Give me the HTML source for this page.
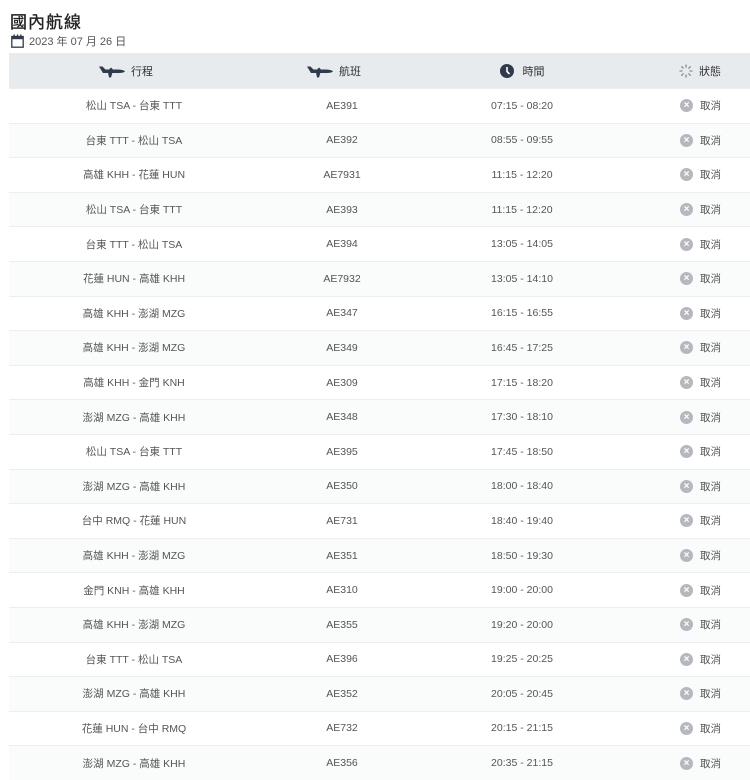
<!DOCTYPE html>
<html><head><meta charset="utf-8">
<style>
*{margin:0;padding:0;box-sizing:border-box}
body{width:750px;height:780px;overflow:hidden;background:#fff;font-family:"Liberation Sans","Noto Sans CJK TC",sans-serif;color:#444}
h1{position:absolute;left:10px;top:8px;font-size:17px;font-weight:normal;color:#222;letter-spacing:1px;-webkit-text-stroke:0.3px #222}
.date{position:absolute;left:11px;top:33px;font-size:11px;color:#555;display:flex;align-items:center;gap:5px}
.tbl{position:absolute;left:9px;top:53px;width:741px}
.hd{height:35px;background:#e8ebee;display:flex;font-size:11px;color:#333}
.row{height:34.6px;display:flex;font-size:10.5px;color:#555;border-top:1px solid #eceef0}
.row:nth-child(even){background:#fafbfb}
.c{display:flex;align-items:center;justify-content:center}
.c1{width:250px}.c2{width:166px}.c3{width:194px}.c4{width:131px;justify-content:flex-start;padding-left:61px}
.hd .c1,.hd .c2{padding-right:16px}
.hd .c4{padding-left:60px}
.x{width:13px;height:13px;border-radius:50%;background:#b5b8bc;color:#fff;font-size:10px;line-height:13px;text-align:center;font-weight:bold;margin-right:7px}
.pl{margin-right:6px}
</style></head><body>
<h1>國內航線</h1>
<div class="date"><svg width="13" height="14" viewBox="0 0 13 14"><rect x="0.8" y="2.5" width="11.4" height="10.7" fill="none" stroke="#2f3b4c" stroke-width="1.3"/><rect x="0.8" y="2.5" width="11.4" height="2.7" fill="#2f3b4c"/><rect x="2.5" y="0.5" width="1.4" height="3" fill="#2f3b4c"/><rect x="5.8" y="0.5" width="1.4" height="3" fill="#2f3b4c"/><rect x="9.1" y="0.5" width="1.4" height="3" fill="#2f3b4c"/></svg>2023 年 07 月 26 日</div>
<div class="tbl">
<div class="hd">
<div class="c c1"><svg class="pl" width="26" height="14" viewBox="0 0 26 14"><path d="M0 2.5 L3.5 2.5 L6.5 5.5 L20 5.5 Q25.5 6 26 7.5 Q24.5 9 20 9 L4 9 Z M9 8.5 L13.5 8.5 L12 13.5 L10 13.5 Z M10 5.5 L12 3.5 L14 5.5 Z" fill="#2f3b4c"/></svg>行程</div>
<div class="c c2"><svg class="pl" width="26" height="14" viewBox="0 0 26 14"><path d="M0 2.5 L3.5 2.5 L6.5 5.5 L20 5.5 Q25.5 6 26 7.5 Q24.5 9 20 9 L4 9 Z M9 8.5 L13.5 8.5 L12 13.5 L10 13.5 Z M10 5.5 L12 3.5 L14 5.5 Z" fill="#2f3b4c"/></svg>航班</div>
<div class="c c3"><svg style="margin-right:9px" width="14" height="14" viewBox="0 0 14 14"><circle cx="7" cy="7" r="7" fill="#2f3b4c"/><path d="M7 3 V7.5 L9.5 10" stroke="#fff" stroke-width="1.6" fill="none"/></svg>時間</div>
<div class="c c4"><svg style="margin-right:6px" width="14" height="14" viewBox="0 0 14 14" stroke="#777" stroke-width="1.1"><path d="M7 0.5V3.5M7 10.5V13.5M0.5 7H3.5M10.5 7H13.5M2.4 2.4L4.5 4.5M9.5 9.5L11.6 11.6M2.4 11.6L4.5 9.5M9.5 4.5L11.6 2.4"/></svg>狀態</div>
</div>
<div class="rows">
<div class="row"><div class="c c1">松山 TSA - 台東 TTT</div><div class="c c2">AE391</div><div class="c c3">07:15 - 08:20</div><div class="c c4"><span class="x">×</span>取消</div></div>
<div class="row"><div class="c c1">台東 TTT - 松山 TSA</div><div class="c c2">AE392</div><div class="c c3">08:55 - 09:55</div><div class="c c4"><span class="x">×</span>取消</div></div>
<div class="row"><div class="c c1">高雄 KHH - 花蓮 HUN</div><div class="c c2">AE7931</div><div class="c c3">11:15 - 12:20</div><div class="c c4"><span class="x">×</span>取消</div></div>
<div class="row"><div class="c c1">松山 TSA - 台東 TTT</div><div class="c c2">AE393</div><div class="c c3">11:15 - 12:20</div><div class="c c4"><span class="x">×</span>取消</div></div>
<div class="row"><div class="c c1">台東 TTT - 松山 TSA</div><div class="c c2">AE394</div><div class="c c3">13:05 - 14:05</div><div class="c c4"><span class="x">×</span>取消</div></div>
<div class="row"><div class="c c1">花蓮 HUN - 高雄 KHH</div><div class="c c2">AE7932</div><div class="c c3">13:05 - 14:10</div><div class="c c4"><span class="x">×</span>取消</div></div>
<div class="row"><div class="c c1">高雄 KHH - 澎湖 MZG</div><div class="c c2">AE347</div><div class="c c3">16:15 - 16:55</div><div class="c c4"><span class="x">×</span>取消</div></div>
<div class="row"><div class="c c1">高雄 KHH - 澎湖 MZG</div><div class="c c2">AE349</div><div class="c c3">16:45 - 17:25</div><div class="c c4"><span class="x">×</span>取消</div></div>
<div class="row"><div class="c c1">高雄 KHH - 金門 KNH</div><div class="c c2">AE309</div><div class="c c3">17:15 - 18:20</div><div class="c c4"><span class="x">×</span>取消</div></div>
<div class="row"><div class="c c1">澎湖 MZG - 高雄 KHH</div><div class="c c2">AE348</div><div class="c c3">17:30 - 18:10</div><div class="c c4"><span class="x">×</span>取消</div></div>
<div class="row"><div class="c c1">松山 TSA - 台東 TTT</div><div class="c c2">AE395</div><div class="c c3">17:45 - 18:50</div><div class="c c4"><span class="x">×</span>取消</div></div>
<div class="row"><div class="c c1">澎湖 MZG - 高雄 KHH</div><div class="c c2">AE350</div><div class="c c3">18:00 - 18:40</div><div class="c c4"><span class="x">×</span>取消</div></div>
<div class="row"><div class="c c1">台中 RMQ - 花蓮 HUN</div><div class="c c2">AE731</div><div class="c c3">18:40 - 19:40</div><div class="c c4"><span class="x">×</span>取消</div></div>
<div class="row"><div class="c c1">高雄 KHH - 澎湖 MZG</div><div class="c c2">AE351</div><div class="c c3">18:50 - 19:30</div><div class="c c4"><span class="x">×</span>取消</div></div>
<div class="row"><div class="c c1">金門 KNH - 高雄 KHH</div><div class="c c2">AE310</div><div class="c c3">19:00 - 20:00</div><div class="c c4"><span class="x">×</span>取消</div></div>
<div class="row"><div class="c c1">高雄 KHH - 澎湖 MZG</div><div class="c c2">AE355</div><div class="c c3">19:20 - 20:00</div><div class="c c4"><span class="x">×</span>取消</div></div>
<div class="row"><div class="c c1">台東 TTT - 松山 TSA</div><div class="c c2">AE396</div><div class="c c3">19:25 - 20:25</div><div class="c c4"><span class="x">×</span>取消</div></div>
<div class="row"><div class="c c1">澎湖 MZG - 高雄 KHH</div><div class="c c2">AE352</div><div class="c c3">20:05 - 20:45</div><div class="c c4"><span class="x">×</span>取消</div></div>
<div class="row"><div class="c c1">花蓮 HUN - 台中 RMQ</div><div class="c c2">AE732</div><div class="c c3">20:15 - 21:15</div><div class="c c4"><span class="x">×</span>取消</div></div>
<div class="row"><div class="c c1">澎湖 MZG - 高雄 KHH</div><div class="c c2">AE356</div><div class="c c3">20:35 - 21:15</div><div class="c c4"><span class="x">×</span>取消</div></div>
</div>
</div>
</body></html>
